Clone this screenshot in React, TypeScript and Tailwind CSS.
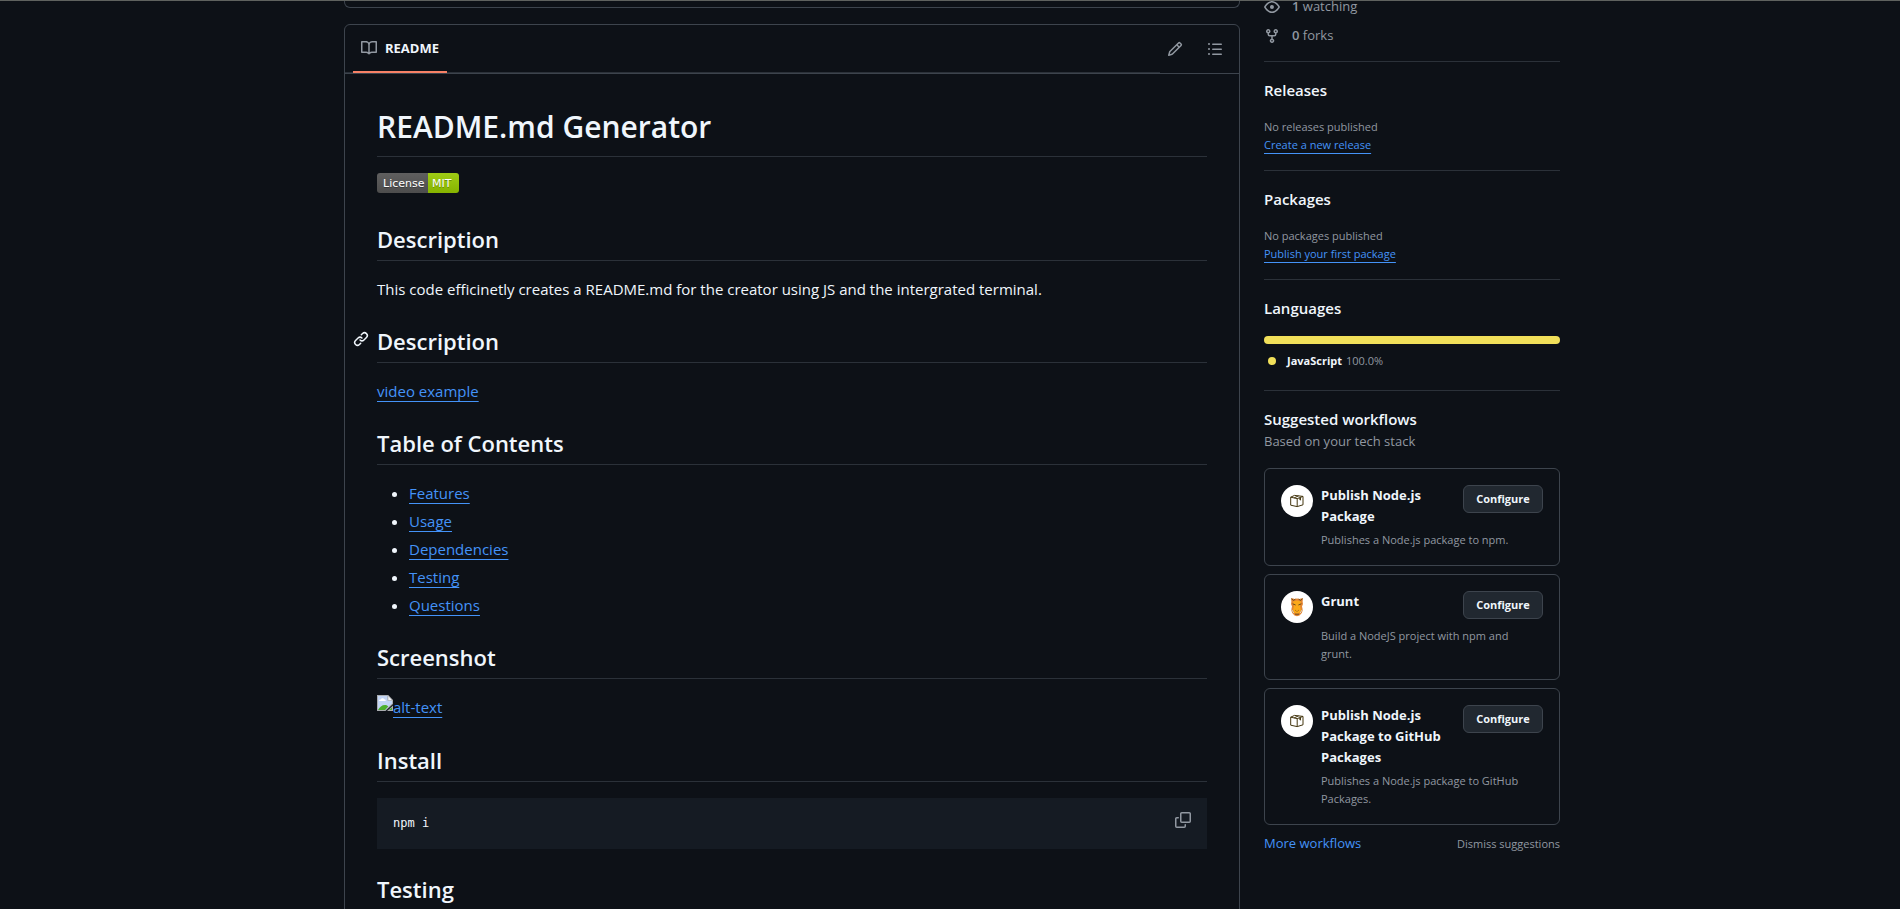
import type { ReactNode } from "react";

type IconProps = { d: string; className?: string };

function Octicon({ d, className = "" }: IconProps) {
  return (
    <svg viewBox="0 0 16 16" aria-hidden="true" className={`size-4 shrink-0 fill-current ${className}`}>
      <path d={d} />
    </svg>
  );
}

const icons = {
  book: "M0 1.75A.75.75 0 0 1 .75 1h4.253c1.227 0 2.317.59 3 1.501A3.743 3.743 0 0 1 11.006 1h4.245a.75.75 0 0 1 .75.75v10.5a.75.75 0 0 1-.75.75h-4.507a2.25 2.25 0 0 0-1.591.659l-.622.621a.75.75 0 0 1-1.06 0l-.622-.621A2.25 2.25 0 0 0 5.258 13H.75a.75.75 0 0 1-.75-.75Zm7.251 10.324.004-5.073-.002-2.253A2.25 2.25 0 0 0 5.003 2.5H1.5v9h3.757a3.75 3.75 0 0 1 1.994.574ZM8.755 4.75l-.004 7.322a3.752 3.752 0 0 1 1.992-.572H14.5v-9h-3.495a2.25 2.25 0 0 0-2.25 2.25Z",
  pencil: "M11.013 1.427a1.75 1.75 0 0 1 2.474 0l1.086 1.086a1.75 1.75 0 0 1 0 2.474l-8.61 8.61c-.21.21-.47.364-.756.445l-3.251.93a.75.75 0 0 1-.927-.928l.929-3.25c.081-.286.235-.547.445-.758l8.61-8.61Zm.176 4.823L9.75 4.81l-6.286 6.287a.253.253 0 0 0-.064.108l-.558 1.953 1.953-.558a.253.253 0 0 0 .108-.064Zm1.238-3.763a.25.25 0 0 0-.354 0L10.811 3.75l1.439 1.44 1.263-1.263a.25.25 0 0 0 0-.354Z",
  list: "M5.75 2.5h8.5a.75.75 0 0 1 0 1.5h-8.5a.75.75 0 0 1 0-1.5Zm0 5h8.5a.75.75 0 0 1 0 1.5h-8.5a.75.75 0 0 1 0-1.5Zm0 5h8.5a.75.75 0 0 1 0 1.5h-8.5a.75.75 0 0 1 0-1.5ZM2 14a1 1 0 1 1 0-2 1 1 0 0 1 0 2Zm1-6a1 1 0 1 1-2 0 1 1 0 0 1 2 0ZM2 4a1 1 0 1 1 0-2 1 1 0 0 1 0 2Z",
  eye: "M8 2c1.981 0 3.671.992 4.933 2.078 1.27 1.091 2.187 2.345 2.637 3.023a1.62 1.62 0 0 1 0 1.798c-.45.678-1.367 1.932-2.637 3.023C11.67 13.008 9.981 14 8 14c-1.981 0-3.671-.992-4.933-2.078C1.797 10.83.88 9.576.43 8.898a1.62 1.62 0 0 1 0-1.798c.45-.677 1.367-1.931 2.637-3.022C4.33 2.992 6.019 2 8 2ZM1.679 7.932a.12.12 0 0 0 0 .136c.411.622 1.241 1.75 2.366 2.717C5.176 11.758 6.527 12.5 8 12.5c1.473 0 2.825-.742 3.955-1.715 1.124-.967 1.954-2.096 2.366-2.717a.12.12 0 0 0 0-.136c-.412-.621-1.242-1.75-2.366-2.717C10.824 4.242 9.473 3.5 8 3.5c-1.473 0-2.825.742-3.955 1.715-1.124.967-1.954 2.096-2.366 2.717ZM8 10a2 2 0 1 1-.001-3.999A2 2 0 0 1 8 10Z",
  fork: "M5 5.372v.878c0 .414.336.75.75.75h4.5a.75.75 0 0 0 .75-.75v-.878a2.25 2.25 0 1 1 1.5 0v.878a2.25 2.25 0 0 1-2.25 2.25h-1.5v2.128a2.251 2.251 0 1 1-1.5 0V8.5h-1.5A2.25 2.25 0 0 1 3.5 6.25v-.878a2.25 2.25 0 1 1 1.5 0ZM5 3.25a.75.75 0 1 0-1.5 0 .75.75 0 0 0 1.5 0Zm6.75.75a.75.75 0 1 0 0-1.5.75.75 0 0 0 0 1.5Zm-3 8.75a.75.75 0 1 0-1.5 0 .75.75 0 0 0 1.5 0Z",
  link: "m7.775 3.275 1.25-1.25a3.5 3.5 0 1 1 4.95 4.95l-2.5 2.5a3.5 3.5 0 0 1-4.95 0 .751.751 0 0 1 .018-1.042.751.751 0 0 1 1.042-.018 1.998 1.998 0 0 0 2.83 0l2.5-2.5a2.002 2.002 0 0 0-2.83-2.83l-1.25 1.25a.751.751 0 0 1-1.042-.018.751.751 0 0 1-.018-1.042Zm-4.69 9.64a1.998 1.998 0 0 0 2.83 0l1.25-1.25a.751.751 0 0 1 1.042.018.751.751 0 0 1 .018 1.042l-1.25 1.25a3.5 3.5 0 1 1-4.95-4.95l2.5-2.5a3.5 3.5 0 0 1 4.95 0 .751.751 0 0 1-.018 1.042.751.751 0 0 1-1.042.018 1.998 1.998 0 0 0-2.83 0l-2.5 2.5a1.998 1.998 0 0 0 0 2.83Z",
  copy: "M0 6.75C0 5.784.784 5 1.75 5h1.5a.75.75 0 0 1 0 1.5h-1.5a.25.25 0 0 0-.25.25v7.5c0 .138.112.25.25.25h7.5a.25.25 0 0 0 .25-.25v-1.5a.75.75 0 0 1 1.5 0v1.5A1.75 1.75 0 0 1 9.25 16h-7.5A1.75 1.75 0 0 1 0 14.25ZM5 1.75C5 .784 5.784 0 6.75 0h7.5C15.216 0 16 .784 16 1.75v7.5A1.75 1.75 0 0 1 14.25 11h-7.5A1.75 1.75 0 0 1 5 9.25Zm1.75-.25a.25.25 0 0 0-.25.25v7.5c0 .138.112.25.25.25h7.5a.25.25 0 0 0 .25-.25v-7.5a.25.25 0 0 0-.25-.25Z",
};

function PackageIcon() {
  return (
    <svg viewBox="0 0 16 16" aria-hidden="true" className="size-4" fill="none" stroke="#44360f" strokeWidth="1" strokeLinejoin="round">
      <path d="M1.700 4.200 5.500 2.400 14 3.400V11.800L8.200 13.600 1.700 12.200ZM1.700 4.200 8.200 5.600 14 3.400M8.200 5.600V13.600M5.200 4.800 9.500 2.900M10.200 5.200 11.400 7.200 11.600 4.400" />
    </svg>
  );
}

function GruntIcon() {
  return (
    <svg viewBox="0 0 16 20" aria-hidden="true" className="h-5 w-4">
      <path d="M2 1.500 4 1.200 5 2 8 1.500 11 2 12 1.200 14 1.500 13.600 4.500 14 7 13 9.500 13.800 13 12.800 16 10.500 18.600 8 19.200 5.500 18.600 3.200 16 2.200 13 3 9.500 2 7 2.400 4.500Z" fill="#e48632" />
      <path d="M4 4.500 8 3.500 12 4.500 11 9 12 13.500 10.500 16 8 16.800 5.500 16 4 13.500 5 9Z" fill="#fba919" />
      <path d="M2.400 1.700 4.400 3.400 6.400 2.200M13.600 1.700 11.600 3.400 9.600 2.200M3.600 6.800 6.600 8M12.400 6.800 9.400 8M6.500 13.400 7.400 14.200M9.500 13.400 8.600 14.200M6 17.200H10" fill="none" stroke="#6b4a1c" strokeWidth="1" />
      <path d="M2.600 12.500 4.800 16M13.400 12.500 11.200 16" fill="none" stroke="#d9d2c4" strokeWidth="1" />
    </svg>
  );
}

function BrokenImageIcon() {
  return (
    <svg viewBox="0 0 16 16" aria-hidden="true" className="inline-block size-4 shrink-0 align-bottom">
      <path d="M0 0H11L16 5V9L8.500 16H0Z" fill="#a9acb0" />
      <path d="M1 1H10.500V5.500H15V8.500L8 15H1Z" fill="#c3d5f5" />
      <path d="M11 .5 15.500 5.500H11Z" fill="#f4f5f6" stroke="#a9acb0" strokeWidth=".6" />
      <path d="M2 6C2 4.700 3.200 4.400 3.800 4.600 4.200 2.700 6.800 2.700 7.200 4.300 8.400 4.200 8.800 5.200 8.700 6Z" fill="#fff" />
      <path d="M1 15C2.500 12 5 10 8 10 9.600 10 10.600 10.500 11.200 11.600L8 15Z" fill="#4caf2c" />
      <path d="M16 10.500V16H10Z" fill="#a9acb0" />
      <path d="M15 12.500V15H12Z" fill="#4caf2c" />
    </svg>
  );
}

function Heading({ children, anchored = false }: { children: ReactNode; anchored?: boolean }) {
  return (
    <h2 className="relative mt-6 mb-4 border-b border-[#2b3139] pb-[5px] text-[22px] leading-8 font-semibold">
      {anchored && (
        <a href="#description" aria-label="Permalink: Description" className="absolute top-[6px] -left-6">
          <Octicon d={icons.link} />
        </a>
      )}
      {children}
    </h2>
  );
}

function TextLink({ href, children }: { href: string; children: ReactNode }) {
  return (
    <a href={href} className="text-[#4493f8] underline underline-offset-4">
      {children}
    </a>
  );
}

function SideSection({ title, children }: { title: string; children: ReactNode }) {
  return (
    <section className="border-t border-[#2b3139] py-4">
      <h2 className="mb-4 text-[15px] leading-6 font-semibold">{title}</h2>
      {children}
    </section>
  );
}

type Workflow = { title: string; description: string; icon: ReactNode };

const workflows: Workflow[] = [
  { title: "Publish Node.js Package", description: "Publishes a Node.js package to npm.", icon: <PackageIcon /> },
  { title: "Grunt", description: "Build a NodeJS project with npm and grunt.", icon: <GruntIcon /> },
  { title: "Publish Node.js Package to GitHub Packages", description: "Publishes a Node.js package to GitHub Packages.", icon: <PackageIcon /> },
];

function WorkflowCard({ title, description, icon }: Workflow) {
  return (
    <li className="rounded-md border border-[#3d444d] p-4">
      <div className="flex min-h-8 items-start gap-2">
        <div className="flex size-8 shrink-0 items-center justify-center rounded-full bg-white">{icon}</div>
        <h3 className="flex-1 text-[13px] leading-[21px] font-bold">{title}</h3>
        <button type="button" aria-label={`Configure ${title}`} className="h-7 w-20 shrink-0 rounded-md border border-[#3d444d] bg-[#212830] text-[11px] font-bold">
          Configure
        </button>
      </div>
      <p className="mt-1 pr-4 pl-10 text-[11px] leading-[18px] text-[#9198a1]">{description}</p>
    </li>
  );
}

const contents = ["Features", "Usage", "Dependencies", "Testing", "Questions"];

export default function App() {
  return (
    <div className="relative h-screen overflow-hidden bg-[#0d1117] pl-1 font-['Open_Sans','Noto_Sans',sans-serif] text-[15px] leading-6 text-[#f0f6fc]">
      <div className="absolute inset-x-0 top-0 z-10 h-px bg-[#5f625f]" />
      <div className="mx-auto flex max-w-[1216px] items-start gap-6">
        <main className="min-w-0 flex-1">
          <div className="h-2 rounded-b-md border-x border-b border-[#3d444d]" />
          <section className="mt-4 rounded-t-md border border-[#3d444d]">
            <div className="flex h-[49px] border-b border-[#3d444d]">
              <nav aria-label="Repository files" className="flex flex-1 border-b border-[#2b3139] pl-2">
                <a href="#readme" className="-mb-px flex items-center gap-2 border-b-2 border-[#f78166] px-2 text-[13px] font-bold">
                  <Octicon d={icons.book} className="text-[#9198a1]" />
                  README
                </a>
              </nav>
              <div className="flex items-center gap-6 pr-4 pl-[7px] text-[#9198a1]">
                <button type="button" aria-label="Edit file"><Octicon d={icons.pencil} /></button>
                <button type="button" aria-label="Outline"><Octicon d={icons.list} /></button>
              </div>
            </div>

            <article id="readme" className="p-8">
              <h1 className="mb-4 border-b border-[#2b3139] pb-2 text-[30px] leading-[42px] font-semibold">README.md Generator</h1>
              <p className="flex h-[26px] items-start">
                <a href="#license" className="flex h-5 overflow-hidden rounded-[3px] font-['DejaVu_Sans','Verdana',sans-serif] text-[11px] leading-[21px] text-white text-shadow-[0_1px_0_#0000004d]">
                  <span className="w-[51px] bg-linear-to-b from-[#5f5f5f] to-[#4d4d4d] pl-[6px]">License</span>
                  <span className="w-[31px] bg-linear-to-b from-[#9fcc14] to-[#86b300] pl-1">MIT</span>
                </a>
              </p>

              <Heading>Description</Heading>
              <p>This code efficinetly creates a README.md for the creator using JS and the intergrated terminal.</p>

              <Heading anchored>Description</Heading>
              <p id="description"><TextLink href="#video">video example</TextLink></p>

              <Heading>Table of Contents</Heading>
              <ul className="flex list-disc flex-col gap-1 pl-8">
                {contents.map((item) => (
                  <li key={item}><TextLink href={`#${item.toLowerCase()}`}>{item}</TextLink></li>
                ))}
              </ul>

              <Heading>Screenshot</Heading>
              <p className="flex h-[25px] items-start">
                <BrokenImageIcon />
                <TextLink href="#screenshot">alt-text</TextLink>
              </p>

              <Heading>Install</Heading>
              <div className="flex items-start justify-between bg-[#151b23] p-4">
                <pre className="font-['DejaVu_Sans_Mono',monospace] text-[12px] leading-[19px]">npm i</pre>
                <button type="button" aria-label="Copy" className="-mt-0.5 text-[#9198a1]"><Octicon d={icons.copy} /></button>
              </div>

              <Heading>Testing</Heading>
            </article>
          </section>
        </main>

        <aside className="-mt-1 w-[296px] shrink-0">
          <ul className="flex flex-col gap-2 pb-[15px] text-[13px] leading-[21px] text-[#9198a1]">
            <li className="flex items-center gap-3"><Octicon d={icons.eye} /><span><strong className="font-semibold">1</strong> watching</span></li>
            <li className="flex items-center gap-3"><Octicon d={icons.fork} /><span><strong className="font-semibold">0</strong> forks</span></li>
          </ul>

          <SideSection title="Releases">
            <div className="text-[11px] leading-[18px] text-[#9198a1]">
              <p>No releases published</p>
              <p><TextLink href="#new-release">Create a new release</TextLink></p>
            </div>
          </SideSection>

          <SideSection title="Packages">
            <div className="text-[11px] leading-[18px] text-[#9198a1]">
              <p>No packages published</p>
              <p><TextLink href="#new-package">Publish your first package</TextLink></p>
            </div>
          </SideSection>

          <SideSection title="Languages">
            <div className="h-2 rounded-full bg-[#f1e05a]" />
            <p className="mt-2 mb-1 flex items-center pl-1 text-[11px] leading-[18px]">
              <span className="mr-[11px] size-2 rounded-full bg-[#f1e05a]" />
              <span className="mr-1 font-bold">JavaScript</span>
              <span className="text-[#9198a1]">100.0%</span>
            </p>
          </SideSection>

          <section className="border-t border-[#2b3139] pt-4">
            <h2 className="text-[15px] leading-6 font-semibold">Suggested workflows</h2>
            <p className="mb-4 text-[13px] leading-[21px] text-[#9198a1]">Based on your tech stack</p>
            <ul className="flex flex-col gap-2">
              {workflows.map((workflow) => <WorkflowCard key={workflow.title} {...workflow} />)}
            </ul>
            <div className="mt-2 flex items-center justify-between leading-[21px]">
              <a href="#workflows" className="text-[13px] text-[#4493f8]">More workflows</a>
              <button type="button" className="text-[11px] text-[#9198a1]">Dismiss suggestions</button>
            </div>
          </section>
        </aside>
      </div>
    </div>
  );
}
